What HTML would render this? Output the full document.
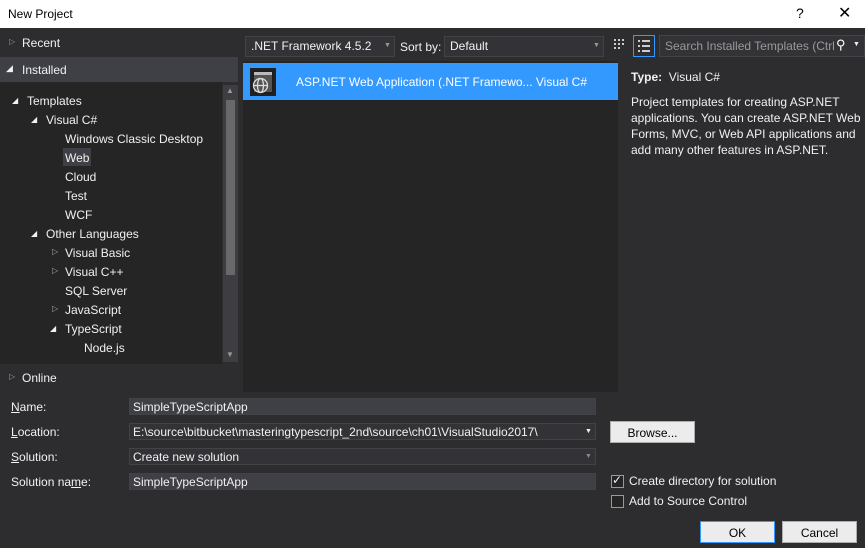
<!DOCTYPE html>
<html><head><style>
*{box-sizing:border-box;margin:0;padding:0}
body{width:865px;height:548px;background:#2d2d30;font-family:"Liberation Sans",sans-serif;font-size:12px;color:#f1f1f1;position:relative;overflow:hidden}
.a{position:absolute;white-space:nowrap}
.title{left:0;top:0;width:865px;height:28px;background:#fff;color:#000}
.tri{display:inline-block;width:0;height:0}
.inp{background:#3f3f46;border:1px solid #434346;height:19px;padding:2px 5px;color:#f1f1f1}
.btn{background:#ececec;border:1px solid #adadad;color:#000;text-align:center;height:22px;padding-top:4px}
.cb{width:13px;height:13px;border:1px solid #999;background:#252526}
u{text-decoration:underline}
</style></head><body>
<div class="a title"><span class="a" style="left:8px;top:7px">New Project</span><span class="a" style="left:796px;top:5px;font-size:14px">?</span><span class="a" style="left:838px;top:3px;font-size:16px">✕</span></div>

<div class="a" style="left:0;top:28px;width:238px;height:364px;background:#2d2d30"></div>
<span class="a" style="left:9px;top:37px;font-size:8px;color:#999">▷</span><span class="a" style="left:22px;top:36px">Recent</span>
<div class="a" style="left:0;top:57px;width:238px;height:25px;background:#3f3f46"></div>
<span class="a" style="left:6px;top:63px;font-size:9px">◢</span><span class="a" style="left:22px;top:63px">Installed</span>
<div class="a" style="left:0;top:82px;width:222px;height:282px;background:#252526"></div>
<div class="a" style="left:223px;top:85px;width:15px;height:277px;background:#3e3e42"></div>
<div class="a" style="left:226px;top:100px;width:9px;height:175px;background:#686868"></div>
<span class="a" style="left:226px;top:86px;font-size:8px;color:#999">▲</span><span class="a" style="left:226px;top:350px;font-size:8px;color:#999">▼</span>
<span class="a" style="left:12px;top:96px;font-size:8px">◢</span><span class="a" style="left:27px;top:94px">Templates</span>
<span class="a" style="left:31px;top:115px;font-size:8px">◢</span><span class="a" style="left:46px;top:113px">Visual C#</span>
<span class="a" style="left:65px;top:132px">Windows Classic Desktop</span>
<div class="a" style="left:63px;top:148px;width:28px;height:18px;background:#3f3f46"></div><span class="a" style="left:65px;top:151px">Web</span>
<span class="a" style="left:65px;top:170px">Cloud</span>
<span class="a" style="left:65px;top:189px">Test</span>
<span class="a" style="left:65px;top:208px">WCF</span>
<span class="a" style="left:31px;top:229px;font-size:8px">◢</span><span class="a" style="left:46px;top:227px">Other Languages</span>
<span class="a" style="left:52px;top:247px;font-size:8px;color:#aaa">▷</span><span class="a" style="left:65px;top:246px">Visual Basic</span>
<span class="a" style="left:52px;top:266px;font-size:8px;color:#aaa">▷</span><span class="a" style="left:65px;top:265px">Visual C++</span>
<span class="a" style="left:65px;top:284px">SQL Server</span>
<span class="a" style="left:52px;top:304px;font-size:8px;color:#aaa">▷</span><span class="a" style="left:65px;top:303px">JavaScript</span>
<span class="a" style="left:50px;top:324px;font-size:8px">◢</span><span class="a" style="left:65px;top:322px">TypeScript</span>
<span class="a" style="left:84px;top:341px">Node.js</span>
<span class="a" style="left:9px;top:372px;font-size:8px;color:#999">▷</span><span class="a" style="left:22px;top:371px">Online</span>

<div class="a inp" style="left:245px;top:36px;width:150px;height:21px;background:#333337">.NET Framework 4.5.2</div><span class="a" style="left:384px;top:42px;font-size:7px;color:#999">▼</span>
<span class="a" style="left:400px;top:40px">Sort by:</span>
<div class="a inp" style="left:444px;top:36px;width:160px;height:21px;background:#333337">Default</div><span class="a" style="left:593px;top:42px;font-size:7px;color:#999">▼</span>
<svg class="a" style="left:613px;top:38px" width="14" height="14"><g fill="#ccc"><rect x="1" y="1" width="2" height="2"/><rect x="5" y="1" width="2" height="2"/><rect x="9" y="1" width="2" height="2"/><rect x="1" y="5" width="2" height="2"/><rect x="5" y="5" width="2" height="2"/><rect x="9" y="5" width="2" height="2"/><rect x="1" y="9" width="2" height="2"/><rect x="5" y="9" width="2" height="2"/></g></svg>
<div class="a" style="left:633px;top:35px;width:22px;height:22px;border:1px solid #3399ff"></div>
<svg class="a" style="left:637px;top:39px" width="14" height="14"><g fill="#ccc"><rect x="1" y="1" width="2" height="2"/><rect x="5" y="1" width="8" height="2"/><rect x="1" y="6" width="2" height="2"/><rect x="5" y="6" width="8" height="2"/><rect x="1" y="11" width="2" height="2"/><rect x="5" y="11" width="8" height="2"/></g></svg>
<div class="a inp" style="left:659px;top:35px;width:206px;height:22px;background:#333337;color:#999;padding-top:3px">Search Installed Templates (Ctrl</div>
<span class="a" style="left:836px;top:37px;font-size:13px;color:#fff">⚲</span><span class="a" style="left:853px;top:41px;font-size:7px">▼</span>

<div class="a" style="left:243px;top:61px;width:375px;height:331px;background:#252526"></div>
<div class="a" style="left:243px;top:63px;width:375px;height:37px;background:#3399ff"></div>
<div class="a" style="left:250px;top:68px;width:26px;height:28px;background:#1e1e1e;border:2px solid #222"><div style="margin:2px;height:20px;background:#555;border-top:3px solid #bbb"></div></div>
<svg class="a" style="left:252px;top:77px" width="17" height="17"><g fill="none" stroke="#ddd" stroke-width="1.3"><circle cx="8.5" cy="8.5" r="7"/><ellipse cx="8.5" cy="8.5" rx="3" ry="7"/><line x1="1.5" y1="8.5" x2="15.5" y2="8.5"/></g></svg>
<span class="a" style="left:296px;top:75px;color:#fff">ASP.NET Web Application (.NET Framewo... Visual C#</span>

<span class="a" style="left:631px;top:70px"><b>Type:</b>&nbsp; Visual C#</span>
<div class="a" style="left:631px;top:94px;width:230px;white-space:normal;line-height:16px">Project templates for creating ASP.NET applications. You can create ASP.NET Web Forms, MVC, or Web API applications and add many other features in ASP.NET.</div>

<span class="a" style="left:11px;top:400px"><u>N</u>ame:</span>
<div class="a inp" style="left:129px;top:398px;width:467px;height:17px;padding:1px 3px">SimpleTypeScriptApp</div>
<span class="a" style="left:11px;top:425px"><u>L</u>ocation:</span>
<div class="a inp" style="left:129px;top:423px;width:467px;height:17px;padding:1px 3px;background:#333337">E:\source\bitbucket\masteringtypescript_2nd\source\ch01\VisualStudio2017\</div><span class="a" style="left:585px;top:428px;font-size:7px">▼</span>
<div class="a btn" style="left:610px;top:421px;width:85px">Browse...</div>
<span class="a" style="left:11px;top:450px"><u>S</u>olution:</span>
<div class="a inp" style="left:129px;top:448px;width:467px;height:17px;padding:1px 3px;background:#333337">Create new solution</div><span class="a" style="left:585px;top:453px;font-size:7px;color:#888">▼</span>
<span class="a" style="left:11px;top:475px">Solution na<u>m</u>e:</span>
<div class="a inp" style="left:129px;top:473px;width:467px;height:17px;padding:1px 3px">SimpleTypeScriptApp</div>
<div class="a cb" style="left:611px;top:475px"></div><span class="a" style="left:612px;top:473px;font-size:12px">✓</span><span class="a" style="left:629px;top:474px">Create directory for solution</span>
<div class="a cb" style="left:611px;top:495px"></div><span class="a" style="left:629px;top:494px">Add to Source Control</span>
<div class="a btn" style="left:700px;top:521px;width:75px;border-color:#3399ff">OK</div>
<div class="a btn" style="left:782px;top:521px;width:75px">Cancel</div>
</body></html>
